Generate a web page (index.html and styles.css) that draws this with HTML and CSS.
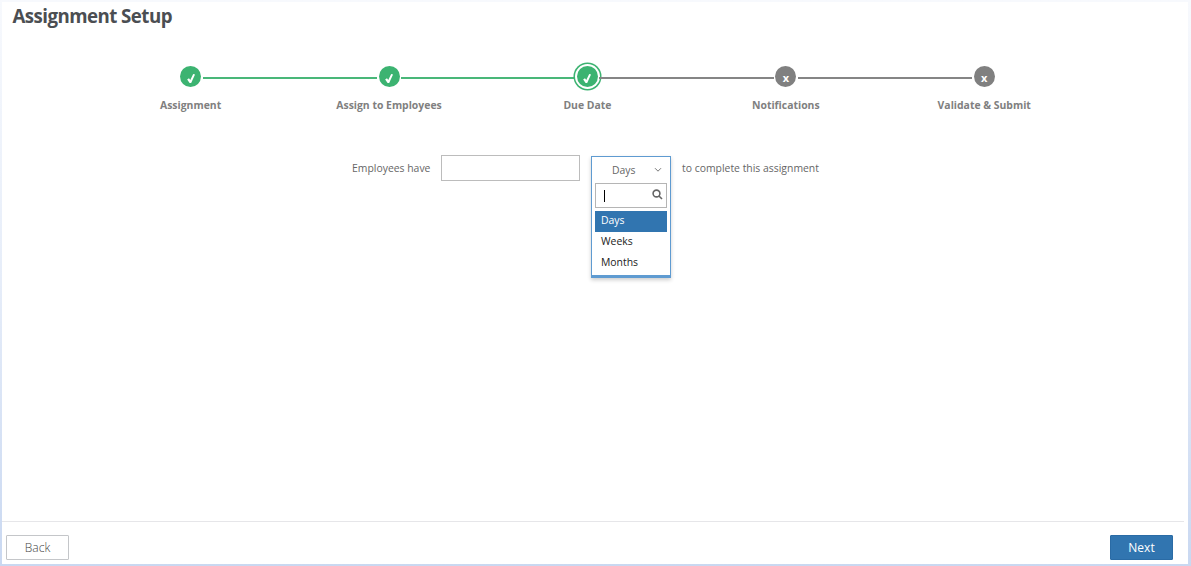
FILE: index.html
```html
<!DOCTYPE html>
<html lang="en">
<head>
<meta charset="utf-8">
<title>Assignment Setup</title>
<link rel="stylesheet" href="styles.css">
</head>
<body>
<div class="frame">
  <main class="page">
    <h1 class="title">Assignment Setup</h1>
    <ol class="steps">
      <li class="step done">
        <span class="dot"><svg class="tick" viewBox="0 0 10 12"><path d="M.8 7.2 2.8 5.8l1.4 1.8L7.4 1l2 .6L5.2 10.8H3.5z"/></svg></span>
        <span class="label">Assignment</span>
      </li>
      <li class="step done">
        <span class="dot"><svg class="tick" viewBox="0 0 10 12"><path d="M.8 7.2 2.8 5.8l1.4 1.8L7.4 1l2 .6L5.2 10.8H3.5z"/></svg></span>
        <span class="label">Assign to Employees</span>
      </li>
      <li class="step done current">
        <span class="dot"><svg class="tick" viewBox="0 0 10 12"><path d="M.8 7.2 2.8 5.8l1.4 1.8L7.4 1l2 .6L5.2 10.8H3.5z"/></svg></span>
        <span class="label">Due Date</span>
      </li>
      <li class="step">
        <span class="dot">x</span>
        <span class="label">Notifications</span>
      </li>
      <li class="step">
        <span class="dot">x</span>
        <span class="label">Validate &amp; Submit</span>
      </li>
    </ol>
    <div class="due">
      <label class="due-before" for="amount">Employees have</label>
      <input class="amount" id="amount" type="text">
      <div class="select">
        <div class="selected">
          <span>Days</span>
          <svg class="chevron" viewBox="0 0 8 6"><path d="M1 1.2l3 3 3-3"/></svg>
        </div>
        <div class="search">
          <span class="caret"></span>
          <svg class="glass" viewBox="0 0 11 11"><circle cx="4.5" cy="4.5" r="3.4"/><path d="M7 7l3 3"/></svg>
        </div>
        <ul class="options">
          <li class="option active">Days</li>
          <li class="option">Weeks</li>
          <li class="option">Months</li>
        </ul>
      </div>
      <span class="due-after">to complete this assignment</span>
    </div>
    <footer class="footer">
      <button class="button back" type="button">Back</button>
      <button class="button next" type="button">Next</button>
    </footer>
  </main>
</div>
</body>
</html>
```
FILE: styles.css
```css
* { box-sizing: border-box; }

body {
  margin: 0;
  font-family: "Open Sans", sans-serif;
  font-size: 10.42px;
  color: #666;
}

.frame {
  height: 566px;
  padding: 2px 3px 2px 2px;
  background: linear-gradient(#f7f9fd, #e6edf9 50%, #c9d8f1);
}

.page {
  display: flex;
  flex-direction: column;
  height: 562px;
  background: #fff;
}

.title {
  margin: 0;
  padding: 0 0 1px 10.5px;
  font-size: 18.7px;
  line-height: 28px;
  font-weight: 700;
  letter-spacing: -0.55px;
  color: #4b4e52;
}

.steps {
  display: flex;
  width: 992px;
  margin: 30px 0 0 89.4px;
  padding: 0;
  list-style: none;
}

.step {
  position: relative;
  flex: 1;
  display: flex;
  flex-direction: column;
  align-items: center;
}

.step + .step::before {
  content: "";
  position: absolute;
  top: 16px;
  left: calc(-50% + 12px);
  width: calc(100% - 24px);
  height: 2px;
  background: #858585;
}

.step.done + .step.done::before { background: #49b779; }

.dot {
  position: relative;
  display: flex;
  align-items: center;
  justify-content: center;
  width: 21px;
  height: 21px;
  margin-top: 5px;
  padding-top: 3px;
  border-radius: 50%;
  background: #808080;
  color: #fff;
  font-size: 11px;
  line-height: 14px;
  font-weight: 700;
}

.done .dot { background: #3cb371; }

.current .dot { box-shadow: 0 0 0 2px #fff, 0 0 0 3.5px #3cb371; }

.tick {
  width: 10px;
  height: 11px;
  fill: #fff;
}

.label {
  margin-top: 11px;
  line-height: 15px;
  font-weight: 700;
  color: #808080;
}

.due {
  display: flex;
  align-items: flex-start;
  margin: 42px 0 0 350px;
}

.due-before,
.due-after {
  padding-top: 5px;
  line-height: 17px;
}

.due-before { width: 89px; }

.amount {
  width: 139px;
  height: 26px;
  padding: 0 6px;
  border: 1px solid #bcbcbc;
  font: inherit;
}

.select {
  width: 80px;
  height: 122px;
  margin: 1px 11px 0 11px;
  padding: 0 3px;
  border: 1px solid #5f9bd1;
  border-bottom-width: 3px;
  box-shadow: 0 2px 4px rgba(0, 0, 0, 0.2);
  background: #fff;
}

.selected {
  display: flex;
  align-items: center;
  justify-content: space-between;
  height: 26px;
  padding: 0 5px 0 17px;
}

.chevron {
  width: 8px;
  height: 6px;
  fill: none;
  stroke: #777;
}

.search {
  display: flex;
  align-items: center;
  justify-content: space-between;
  height: 25px;
  padding: 0 3px 0 8px;
  border: 1px solid #b5b5b5;
}

.caret {
  width: 1px;
  height: 12px;
  margin-top: 1px;
  background: #000;
}

.glass {
  width: 11px;
  height: 11px;
  margin-bottom: 2px;
  fill: none;
  stroke: #666;
  stroke-width: 1.6;
}

.options {
  margin: 3px 0 0;
  padding: 0;
  list-style: none;
}

.option {
  height: 21px;
  padding-left: 6px;
  line-height: 18px;
  color: #222;
}

.option.active {
  background: #3175b0;
  color: #fff;
}

.footer {
  display: flex;
  justify-content: space-between;
  height: 43px;
  margin: auto 4px 0 0;
  padding: 13px 11px 0 4px;
  border-top: 1px solid #e6e6e9;
}

.button {
  width: 63px;
  height: 25px;
  padding: 0;
  border: 1px solid #c4c6c9;
  border-radius: 1px;
  font: 300 12px/22px "Open Sans", sans-serif;
}

.back {
  background: #fff;
  color: #444;
}

.next {
  border-color: #2a6ba5;
  background: #3175b0;
  color: #fff;
  font-weight: 400;
}
```
